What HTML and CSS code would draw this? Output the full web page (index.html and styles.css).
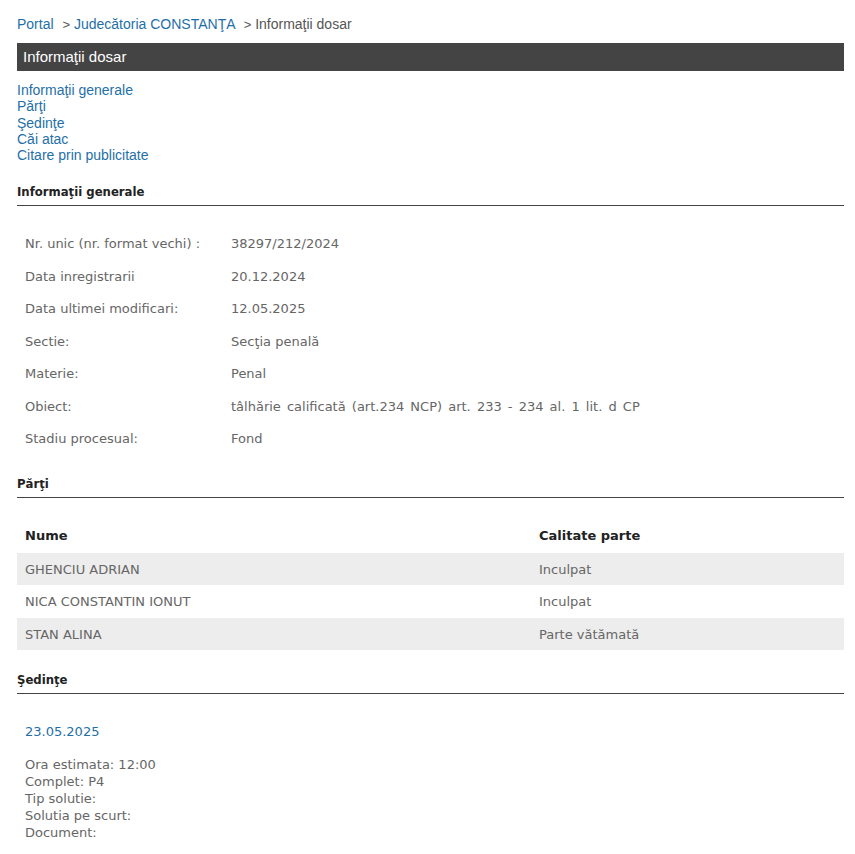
FILE: index.html
```html
<!DOCTYPE html>
<html>
    <head>
        <title>Informaţii dosar</title>
        <meta charset="UTF-8">
        <link rel="stylesheet" href="styles.css">
    </head>
    <body>
        <div class="breadcrumb">
            <a href="#">Portal</a>
            <span class="sep">&gt;</span>
            <a href="#">Judecătoria CONSTANŢA</a>
            <span class="sep">&gt;</span>
            <span class="current">Informaţii dosar</span>
        </div>

        <div class="bar">Informaţii dosar</div>

        <div class="menu">
            <a href="#generale">Informaţii generale</a>
            <a href="#parti">Părţi</a>
            <a href="#sedinte">Şedinţe</a>
            <a href="#">Căi atac</a>
            <a href="#">Citare prin publicitate</a>
        </div>

        <h2 class="section" id="generale">Informaţii generale</h2>
        <table class="info">
            <tr><td class="label">Nr. unic (nr. format vechi) :</td><td>38297/212/2024</td></tr>
            <tr><td class="label">Data inregistrarii</td><td>20.12.2024</td></tr>
            <tr><td class="label">Data ultimei modificari:</td><td>12.05.2025</td></tr>
            <tr><td class="label">Sectie:</td><td>Secţia penală</td></tr>
            <tr><td class="label">Materie:</td><td>Penal</td></tr>
            <tr><td class="label">Obiect:</td><td class="obiect">tâlhărie calificată (art.234 NCP) art. 233 - 234 al. 1 lit. d CP</td></tr>
            <tr><td class="label">Stadiu procesual:</td><td>Fond</td></tr>
        </table>

        <h2 class="section" id="parti">Părţi</h2>
        <table class="parti">
            <tr><th class="nume">Nume</th><th>Calitate parte</th></tr>
            <tr class="odd"><td>GHENCIU ADRIAN</td><td>Inculpat</td></tr>
            <tr><td>NICA CONSTANTIN IONUT</td><td>Inculpat</td></tr>
            <tr class="odd"><td>STAN ALINA</td><td>Parte vătămată</td></tr>
        </table>

        <h2 class="section" id="sedinte">Şedinţe</h2>
        <div class="sedinta">
            <div class="data">23.05.2025</div>
            <div class="detalii">
                Ora estimata: 12:00<br>
                Complet: P4<br>
                Tip solutie:<br>
                Solutia pe scurt:<br>
                Document:
            </div>
        </div>
    </body>
</html>
```

FILE: styles.css
```css
body {
    margin: 0;
    padding: 0 11px 0 17px;
    font-family: "Liberation Sans", Arial, sans-serif;
    font-size: 14px;
    color: #555;
    background: #fff;
}

a {
    color: #1f6fa8;
    text-decoration: none;
}

.breadcrumb {
    padding-top: 16px;
    height: 27px;
    line-height: 17px;
}

.breadcrumb .sep {
    color: #555;
    font-size: 13px;
    margin-left: 5px;
}

.breadcrumb .current {
    color: #555;
}

.bar {
    background: #444;
    color: #fff;
    font-size: 15px;
    height: 28px;
    line-height: 28px;
    padding-left: 6px;
}

.menu {
    padding-top: 11px;
    margin-bottom: 22px;
}

.menu a {
    display: block;
    line-height: 16.3px;
}

.section {
    font-family: "DejaVu Sans", Tahoma, sans-serif;
    font-size: 11.7px;
    font-weight: bold;
    color: #222;
    margin: 0;
    padding-bottom: 6px;
    border-bottom: 1px solid #444;
}

.info, .parti {
    width: 100%;
    border-collapse: collapse;
    font-family: "DejaVu Sans", Tahoma, sans-serif;
    font-size: 13px;
    color: #666;
}

.info {
    margin: 21px 0 22px;
}

.info td {
    height: 32.5px;
    padding: 0 8px;
}

.info .label {
    width: 190px;
}

.info .obiect {
    word-spacing: 2px;
}

.parti {
    margin: 20px 0 23px;
}

.parti th {
    text-align: left;
    color: #222;
    height: 35px;
    padding: 0 8px;
}

.parti th.nume {
    width: 498px;
}

.parti td {
    height: 32.5px;
    padding: 0 8px;
}

.parti tr.odd {
    background: #ededed;
}

.sedinta {
    padding: 0 8px;
}

.data {
    font-family: "DejaVu Sans", Tahoma, sans-serif;
    font-size: 13px;
    line-height: 17px;
    color: #1f6fa8;
    margin-top: 29px;
    margin-bottom: 16px;
}

.detalii {
    font-family: "DejaVu Sans", Tahoma, sans-serif;
    font-size: 13px;
    line-height: 17px;
    color: #666;
}
```
